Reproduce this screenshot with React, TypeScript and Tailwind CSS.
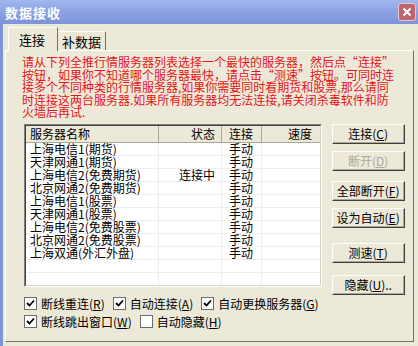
import React from 'react';

const FONT = '"SimSun", "Noto Sans CJK SC", "Liberation Sans", sans-serif';

const servers = [
  { name: '上海电信1(期货)', state: '', mode: '手动' },
  { name: '天津网通1(期货)', state: '', mode: '手动' },
  { name: '上海电信2(免费期货)', state: '连接中', mode: '手动' },
  { name: '北京网通2(免费期货)', state: '', mode: '手动' },
  { name: '上海电信1(股票)', state: '', mode: '手动' },
  { name: '天津网通1(股票)', state: '', mode: '手动' },
  { name: '上海电信2(免费股票)', state: '', mode: '手动' },
  { name: '北京网通2(免费股票)', state: '', mode: '手动' },
  { name: '上海双通(外汇外盘)', state: '', mode: '手动' },
  { name: '', state: '', mode: '' },
  { name: '', state: '', mode: '' },
];

const notice = [
  '请从下列全推行情服务器列表选择一个最快的服务器，然后点“连接”',
  '按钮，如果你不知道哪个服务器最快，请点击“测速”按钮。可同时连',
  '接多个不同种类的行情服务器,如果你需要同时看期货和股票,那么请同',
  '时连接这两台服务器.如果所有服务器均无法连接,请关闭杀毒软件和防',
  '火墙后再试.',
];

const Btn: React.FC<{ label: string; k: string; tail?: string; disabled?: boolean; className?: string }> = ({
  label,
  k,
  tail = ')',
  disabled,
  className = '',
}) => (
  <div
    className={`w-[73px] h-[20px] flex items-center justify-center border border-t-white border-l-white border-b-[#404040] border-r-[#404040] shadow-[inset_-1px_-1px_0_#ACA899] bg-[#ECE9D8] ${
      disabled ? 'text-[#ACA899]' : 'text-black'
    } ${className}`}
  >
    <span className="whitespace-nowrap h-[14px] leading-[14px]">
      {label}(<u>{k}</u>
      {tail}
    </span>
  </div>
);

const Check: React.FC<{ on?: boolean; label: string; k: string }> = ({ on, label, k }) => (
  <div className="flex items-center gap-[4px] mr-[8px] h-[14px]">
    <div className="w-[13px] h-[13px] bg-white border border-[#6d6d6d] flex items-center justify-center">
      {on && (
        <svg width="9" height="9" viewBox="0 0 9 9">
          <path d="M1 4 L3.5 6.5 L8 1.5" stroke="#000" strokeWidth="1.8" fill="none" />
        </svg>
      )}
    </div>
    <span className="whitespace-nowrap h-[14px] leading-[14px]">
      {label}(<u>{k}</u>)
    </span>
  </div>
);

export default function App() {
  return (
    <div
      className="w-[418px] h-[346px] bg-[#ECE9D8] overflow-hidden text-[12px] leading-[13px] flex flex-col"
      style={{ fontFamily: FONT }}
    >
      {/* title bar */}
      <div className="h-[24px] shrink-0 bg-gradient-to-b from-[#A3B7EE] via-[#8BA2E2] to-[#7C94D8] flex items-center justify-between pl-[5px] pr-[2px]">
        <span className="text-white font-bold text-[13px] tracking-[1px]">数据接收</span>
        <div className="w-[18px] h-[18px] rounded-[3px] bg-[#C0646E] border border-[#E9C9CC] flex items-center justify-center">
          <svg width="10" height="10" viewBox="0 0 10 10">
            <path d="M1.5 1.5 L8.5 8.5 M8.5 1.5 L1.5 8.5" stroke="#fff" strokeWidth="2" />
          </svg>
        </div>
      </div>

      <div className="flex-1 border-l-[3px] border-[#7D95D8] pl-[2px] pr-[4px] flex flex-col">
        {/* tabs */}
        <div className="flex items-end h-[26px] pl-[3px] relative z-10">
          <div className="h-[24px] w-[50px] -mb-[1px] bg-[#ECE9D8] border border-b-0 border-t-white border-l-white border-r-[#716F64] flex items-center pl-[10px] text-[13px]">
            连接
          </div>
          <div className="h-[19px] px-[4px] border-t border-r border-t-white border-r-[#716F64] flex items-center text-[13px]">
            补数据
          </div>
        </div>

        {/* panel */}
        <div className="h-[292px] border border-t-white border-l-white border-r-[#716F64] border-b-[#716F64] pl-[16px] pt-[5px]">
          <div className="text-[#E8141A] flex flex-col">
            {notice.map((line, i) => (
              <div key={i} className="whitespace-nowrap h-[12.5px] leading-[12.5px]">
                {line}
              </div>
            ))}
          </div>

          <div className="flex mt-[5px] ml-[2px]">
            <div className="flex flex-col">
              {/* table */}
              <div className="w-[298px] h-[163px] border border-t-[#7F7F7F] border-l-[#7F7F7F] border-b-white border-r-white">
                <div className="h-full bg-white border border-t-[#404040] border-l-[#404040] border-b-[#D4D0C8] border-r-[#D4D0C8] overflow-hidden">
                  <div className="flex h-[17px] bg-[#ECE9D8] border-b border-[#ACA899]">
                    <div className="w-[133px] pl-[4px] flex items-center border-r border-[#ACA899]">服务器名称</div>
                    <div className="w-[63px] pr-[6px] flex items-center justify-end border-r border-[#ACA899]">状态</div>
                    <div className="w-[40px] pl-[7px] flex items-center border-r border-[#ACA899]">连接</div>
                    <div className="flex-1 pr-[8px] flex items-center justify-end">速度</div>
                  </div>
                  {servers.map((s, i) => (
                    <div key={i} className="flex h-[13px] leading-[12px] border-b border-[#EDEDED]">
                      <div className="w-[133px] pl-[4px] border-r border-[#EDEDED] whitespace-nowrap">{s.name}</div>
                      <div className="w-[63px] pr-[6px] text-right border-r border-[#EDEDED]">{s.state}</div>
                      <div className="w-[40px] pl-[7px] border-r border-[#EDEDED]">{s.mode}</div>
                      <div className="flex-1" />
                    </div>
                  ))}
                </div>
              </div>

              {/* checkboxes */}
              <div className="flex flex-col gap-[4px] mt-[10px]">
                <div className="flex">
                  <Check on label="断线重连" k="R" />
                  <Check on label="自动连接" k="A" />
                  <Check on label="自动更换服务器" k="G" />
                </div>
                <div className="flex">
                  <Check on label="断线跳出窗口" k="W" />
                  <Check label="自动隐藏" k="H" />
                </div>
              </div>
            </div>

            {/* buttons */}
            <div className="flex flex-col ml-[5px]">
              <Btn label="连接" k="C" />
              <Btn label="断开" k="D" disabled className="mt-[7px]" />
              <Btn label="全部断开" k="F" className="mt-[10px]" />
              <Btn label="设为自动" k="E" className="mt-[7px]" />
              <Btn label="测速" k="T" className="mt-[15px]" />
              <Btn label="隐藏" k="U" tail=").." className="mt-[12px]" />
            </div>
          </div>
        </div>
      </div>
    </div>
  );
}
